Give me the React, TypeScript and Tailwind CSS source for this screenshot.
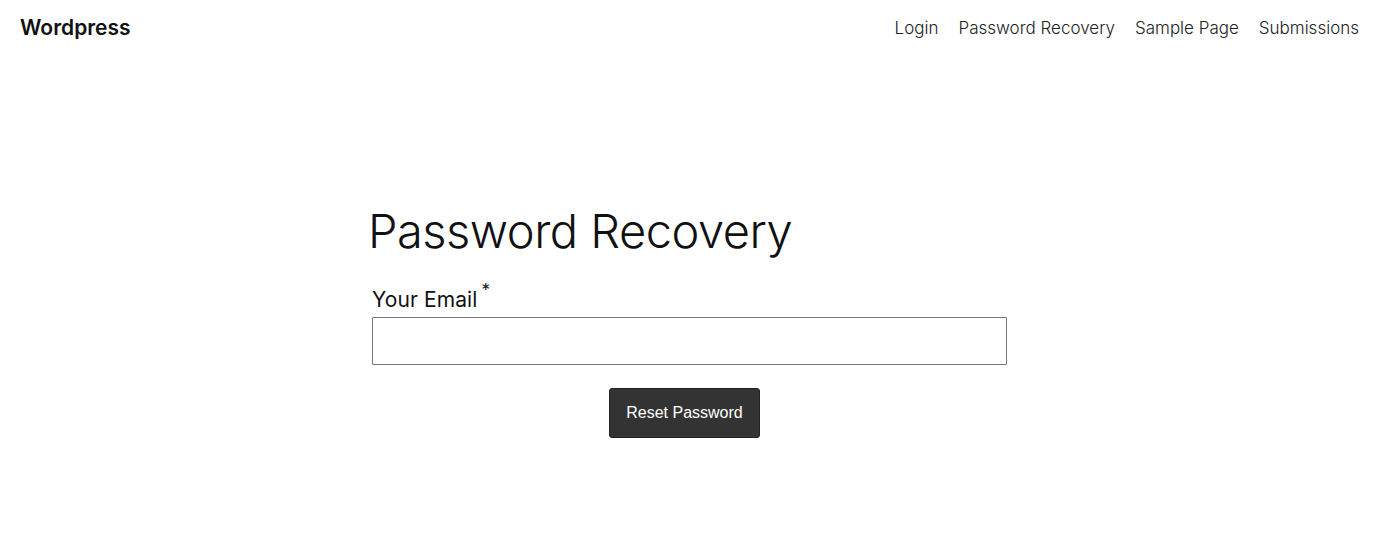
export default function App() {
  const links = ['Login', 'Password Recovery', 'Sample Page', 'Submissions']
  return (
    <div className="min-h-[537px] bg-white text-[#111]" style={{ fontFamily: 'Inter, "Noto Sans", sans-serif' }}>
      {/* Header */}
      <header className="flex items-center justify-between h-[55px] pl-5 pr-[27px]">
        <div className="text-[21px] font-semibold">Wordpress</div>
        <nav className="flex gap-5 pt-[2px] text-[17px] font-light text-[#222]">
          {links.map((l) => (
            <a key={l} href="#">{l}</a>
          ))}
        </nav>
      </header>

      <main className="w-[650px] mx-auto pt-[148px]">
        <h1 className="text-[47px] font-light leading-[1.2] tracking-[-0.5px]">Password Recovery</h1>
        <form className="mt-[29px] ml-1">
          <label className="flex items-start text-[21px] leading-6 tracking-[0.1px]">
            Your Email<span className="ml-[4px] -mt-[6px] text-[17px] leading-none">*</span>
          </label>
          <input type="email" className="block mt-[5px] w-[635px] h-[48px] border border-[#767676] rounded-[1px] outline-none" />
          <div className="w-[625px] flex justify-center mt-[23px]">
            <button
              type="button"
              className="h-[50px] px-4 bg-[#333] text-white text-[16px] rounded-[3px] border border-[#222]"
              style={{ fontFamily: '"Liberation Sans", Arial, sans-serif' }}
            >
              Reset Password
            </button>
          </div>
        </form>
      </main>
    </div>
  )
}
